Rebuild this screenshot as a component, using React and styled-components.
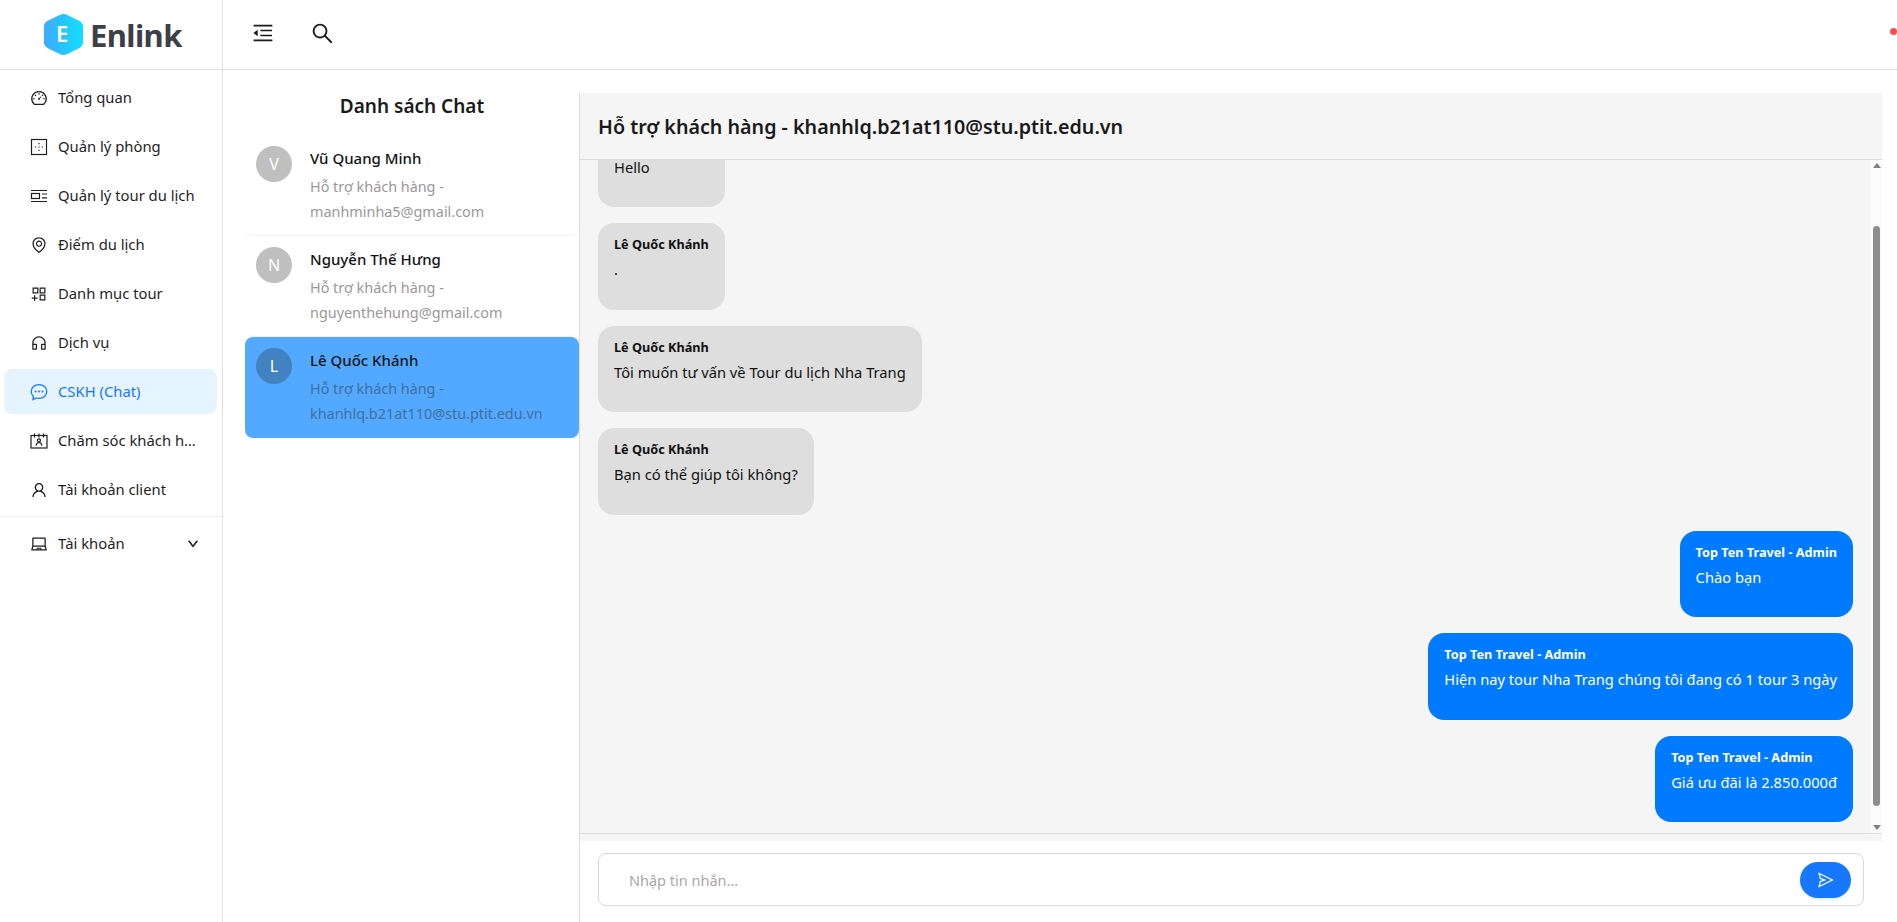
import React, { useLayoutEffect, useRef } from 'react'
import styled, { createGlobalStyle } from 'styled-components'
import {
    AiOutlineMenuFold, AiOutlineSearch, AiOutlineDashboard, AiOutlineEnvironment,
    AiOutlineAppstoreAdd, AiOutlineCustomerService, AiOutlineUser, AiOutlineLaptop,
    AiOutlineDown, AiOutlineSend,
} from 'react-icons/ai'

const RoomIcon = ({ size }) => (
    <svg width={size} height={size} viewBox="0 0 18 18" fill="none" stroke="currentColor">
        <rect x="1.5" y="1.5" width="15" height="15" strokeWidth="1.2" />
        <path d="M9 5v1.2M9 8.4v1.2M9 11.8v1.2M5 9h1.2M8.4 9h1.2M11.8 9H13" strokeWidth="1.2" />
    </svg>
)

const TourIcon = ({ size }) => (
    <svg width={size} height={size} viewBox="0 0 18 18" fill="none" stroke="currentColor" strokeWidth="1.2">
        <path d="M1 3.5h16M1 14.5h16M12 7h5M12 10.8h5" />
        <rect x="1.5" y="6.5" width="8" height="5" />
    </svg>
)

const ChatIcon = ({ size }) => (
    <svg width={size} height={size} viewBox="0 0 18 18" fill="none" stroke="currentColor">
        <path
            d="M9 1.6c4.4 0 7.8 3 7.8 6.9s-3.4 6.9-7.8 6.9c-1 0-1.9-.1-2.7-.4L3 16.6l.3-3.3C2 12 1.2 10.4 1.2 8.5 1.2 4.6 4.6 1.6 9 1.6z"
            strokeWidth="1.3"
        />
        <g fill="currentColor" stroke="none">
            <circle cx="5.6" cy="8.5" r="1" />
            <circle cx="9" cy="8.5" r="1" />
            <circle cx="12.4" cy="8.5" r="1" />
        </g>
    </svg>
)

const CareIcon = ({ size }) => (
    <svg width={size} height={size} viewBox="0 0 18 18" fill="none" stroke="currentColor" strokeWidth="1.2">
        <rect x="1" y="3.5" width="16" height="12.5" />
        <path d="M4.5 1.5v4M9 1.5v4M13.5 1.5v4" />
        <circle cx="9" cy="8.3" r="1.5" />
        <path d="M6 13.5c.4-2 1.5-3 3-3s2.600 1 3 3" />
    </svg>
)

const menu = [
    { label: 'Tổng quan', icon: AiOutlineDashboard },
    { label: 'Quản lý phòng', icon: RoomIcon },
    { label: 'Quản lý tour du lịch', icon: TourIcon },
    { label: 'Điểm du lịch', icon: AiOutlineEnvironment },
    { label: 'Danh mục tour', icon: AiOutlineAppstoreAdd },
    { label: 'Dịch vụ', icon: AiOutlineCustomerService },
    { label: 'CSKH (Chat)', icon: ChatIcon, active: true },
    { label: 'Chăm sóc khách hàng', icon: CareIcon },
    { label: 'Tài khoản client', icon: AiOutlineUser },
]

const chats = [
    { name: 'Vũ Quang Minh', email: 'manhminha5@gmail.com' },
    { name: 'Nguyễn Thế Hưng', email: 'nguyenthehung@gmail.com' },
    { name: 'Lê Quốc Khánh', email: 'khanhlq.b21at110@stu.ptit.edu.vn', active: true },
]

const CLIENT = 'Lê Quốc Khánh'
const ADMIN = 'Top Ten Travel - Admin'

const messages = [
    { from: CLIENT, text: 'Hi' },
    { from: CLIENT, text: 'Hello' },
    { from: CLIENT, text: '.' },
    { from: CLIENT, text: 'Tôi muốn tư vấn về Tour du lịch Nha Trang' },
    { from: CLIENT, text: 'Bạn có thể giúp tôi không?' },
    { from: ADMIN, text: 'Chào bạn', mine: true },
    { from: ADMIN, text: 'Hiện nay tour Nha Trang chúng tôi đang có 1 tour 3 ngày', mine: true },
    { from: ADMIN, text: 'Giá ưu đãi là 2.850.000đ', mine: true },
]

const App = () => {
    const listRef = useRef(null)

    useLayoutEffect(() => {
        listRef.current.scrollTop = listRef.current.scrollHeight
    }, [])

    return (
        <Page>
            <GlobalStyle />
            <Header>
                <LogoBox>
                    <svg width="41" height="43" viewBox="0 0 42 44">
                        <defs>
                            <linearGradient id="hex" x1="0" y1="0" x2="1" y2="0">
                                <stop offset="0" stopColor="#3fa9ff" />
                                <stop offset="1" stopColor="#10e0ff" />
                            </linearGradient>
                        </defs>
                        <path
                            d="M17 2 Q21 0 25 2 L37 8 Q41 10 41 14 L41 30 Q41 34 37 36 L25 42 Q21 44 17 42 L5 36 Q1 34 1 30 L1 14 Q1 10 5 8 Z"
                            fill="url(#hex)"
                        />
                    </svg>
                    <LogoLetter>E</LogoLetter>
                    <LogoText>Enlink</LogoText>
                </LogoBox>
                <HeaderTools>
                    <AiOutlineMenuFold size={24} />
                    <AiOutlineSearch size={25} />
                    <Dot />
                </HeaderTools>
            </Header>
            <Body>
                <Sidebar>
                    {menu.map((item) => (
                        <MenuItem key={item.label} $active={item.active}>
                            <item.icon size={18} />
                            <MenuLabel>{item.label}</MenuLabel>
                        </MenuItem>
                    ))}
                    <MenuDivider />
                    <MenuItem>
                        <AiOutlineLaptop size={18} />
                        <MenuLabel>Tài khoản</MenuLabel>
                        <AiOutlineDown size={12} strokeWidth={70} />
                    </MenuItem>
                </Sidebar>
                <Main>
                    <ChatList>
                        <ListTitle>Danh sách Chat</ListTitle>
                        {chats.map((chat) => (
                            <ChatItem key={chat.name} $active={chat.active}>
                                <Avatar $active={chat.active}>{chat.name[0]}</Avatar>
                                <ChatText>
                                    <ChatName>{chat.name}</ChatName>
                                    <ChatDesc $active={chat.active}>
                                        Hỗ trợ khách hàng -<br />
                                        {chat.email}
                                    </ChatDesc>
                                </ChatText>
                            </ChatItem>
                        ))}
                    </ChatList>
                    <ChatColumn>
                        <ChatPanel>
                            <ChatTitle>Hỗ trợ khách hàng - khanhlq.b21at110@stu.ptit.edu.vn</ChatTitle>
                            <MessageArea>
                                <MessageList ref={listRef}>
                                    {messages.map((msg, i) => (
                                        <Bubble key={i} $mine={msg.mine}>
                                            <Sender>{msg.from}</Sender>
                                            <div>{msg.text}</div>
                                        </Bubble>
                                    ))}
                                </MessageList>
                                <ScrollTrack>
                                    <ScrollArrow $up />
                                    <ScrollThumb />
                                    <ScrollArrow />
                                </ScrollTrack>
                            </MessageArea>
                        </ChatPanel>
                        <InputBar>
                            <MessageInput placeholder="Nhập tin nhắn..." />
                            <SendButton>
                                <AiOutlineSend size={18} />
                            </SendButton>
                        </InputBar>
                    </ChatColumn>
                </Main>
            </Body>
        </Page>
    )
}

const GlobalStyle = createGlobalStyle`
    html, body {
        margin: 0;
        height: 100%;
        overflow: hidden;
        background: #ffffff;
    }
    * {
        box-sizing: border-box;
    }
`

const Page = styled.div`
    height: 922px;
    display: flex;
    flex-direction: column;
    font-family: "Noto Sans", "Open Sans", sans-serif;
    font-size: 14.8px;
    color: #1a1a1a;
`

const Header = styled.header`
    height: 70px;
    flex: none;
    display: flex;
    border-bottom: 1px solid #e0e0e0;
`

const LogoBox = styled.div`
    width: 223px;
    flex: none;
    position: relative;
    display: flex;
    align-items: center;
    gap: 6px;
    padding-left: 43px;
    border-right: 1px solid #e0e0e0;
`

const LogoLetter = styled.span`
    position: absolute;
    left: 56px;
    top: 17px;
    color: #ffffff;
    font-size: 22px;
    font-weight: 600;
    line-height: 33px;
`

const LogoText = styled.span`
    font-size: 31px;
    font-weight: 700;
    color: #3c4046;
    letter-spacing: -0.6px;
`

const HeaderTools = styled.div`
    flex: 1;
    display: flex;
    align-items: center;
    gap: 35px;
    padding: 0 0 3px 28px;
    color: #1a1a1a;
`

const Dot = styled.span`
    width: 7px;
    height: 7px;
    margin-left: auto;
    margin-bottom: 3px;
    border-radius: 50%;
    background: #ff4d4f;
`

const Body = styled.div`
    flex: 1;
    display: flex;
    min-height: 0;
`

const Sidebar = styled.nav`
    width: 223px;
    flex: none;
    padding: 5px 5px 0 4px;
    border-right: 1px solid #e0e0e0;
`

const MenuItem = styled.div`
    height: 45px;
    margin-bottom: 4px;
    padding: 0 18px 0 26px;
    display: flex;
    align-items: center;
    gap: 10px;
    border-radius: 8px;
    color: ${(p) => (p.$active ? '#1677ff' : '#1f1f1f')};
    background: ${(p) => (p.$active ? '#e6f4ff' : 'transparent')};
    svg {
        flex: none;
    }
`

const MenuLabel = styled.span`
    flex: 1;
    min-width: 0;
    padding-bottom: 2px;
    white-space: nowrap;
    overflow: hidden;
    text-overflow: ellipsis;
`

const MenuDivider = styled.div`
    height: 1px;
    margin: 3px -5px 4px -4px;
    background: #eeeeee;
`

const Main = styled.main`
    flex: 1;
    min-width: 0;
    display: flex;
    padding: 23px 15px 0 22px;
`

const ChatList = styled.section`
    width: 334px;
    flex: none;
`

const ListTitle = styled.h2`
    margin: 0;
    height: 42px;
    font-size: 19px;
    font-weight: 600;
    line-height: 27px;
    text-align: center;
`

const ChatItem = styled.div`
    height: 101px;
    padding: 11px;
    display: flex;
    gap: 18px;
    border-radius: 8px;
    background: ${(p) => (p.$active ? '#52a9ff' : '#ffffff')};
    border-bottom: 1px solid ${(p) => (p.$active ? 'transparent' : '#f0f0f0')};
`

const Avatar = styled.div`
    width: 36px;
    height: 36px;
    flex: none;
    display: flex;
    align-items: center;
    justify-content: center;
    border-radius: 50%;
    color: #ffffff;
    font-size: 16px;
    background: ${(p) => (p.$active ? '#4282c1' : '#bfbfbf')};
`

const ChatText = styled.div`
    padding-top: 1px;
`

const ChatName = styled.div`
    font-size: 15px;
    font-weight: 500;
    line-height: 22px;
    margin-bottom: 5px;
    color: #141414;
`

const ChatDesc = styled.div`
    font-size: 14.4px;
    line-height: 25px;
    color: ${(p) => (p.$active ? '#3f6f9f' : '#999999')};
    white-space: nowrap;
`

const ChatColumn = styled.section`
    flex: 1;
    min-width: 0;
    display: flex;
    flex-direction: column;
    border-left: 1px solid #dddddd;
`

const ChatPanel = styled.div`
    height: 748px;
    flex: none;
    display: flex;
    flex-direction: column;
    background: #f5f5f5;
    padding-bottom: 7px;
`

const ChatTitle = styled.h3`
    margin: 0;
    height: 67px;
    flex: none;
    padding-left: 18px;
    display: flex;
    align-items: center;
    font-size: 19.7px;
    font-weight: 600;
    border-bottom: 1px solid #dddddd;
`

const MessageArea = styled.div`
    flex: 1;
    min-height: 0;
    position: relative;
    display: flex;
    border-bottom: 1px solid #dddddd;
`

const MessageList = styled.div`
    flex: 1;
    min-width: 0;
    overflow-y: scroll;
    scrollbar-width: none;
    display: flex;
    flex-direction: column;
    gap: 16px;
    padding: 16px 29px 11px 18px;
`

const ScrollTrack = styled.div`
    position: absolute;
    top: 0;
    right: 0;
    bottom: 0;
    width: 11px;
    padding: 3px 0;
    display: flex;
    flex-direction: column;
    align-items: center;
    background: #fbfbfb;
`

const ScrollArrow = styled.span`
    flex: none;
    width: 0;
    height: 0;
    border-left: 4px solid transparent;
    border-right: 4px solid transparent;
    border-top: ${(p) => (p.$up ? '0' : '5px solid #808080')};
    border-bottom: ${(p) => (p.$up ? '5px solid #808080' : '0')};
`

const ScrollThumb = styled.span`
    width: 7px;
    height: 580px;
    margin: 58px 0 auto;
    border-radius: 4px;
    background: #8e8e8e;
`

const Bubble = styled.div`
    flex: none;
    align-self: ${(p) => (p.$mine ? 'flex-end' : 'flex-start')};
    min-width: 125px;
    height: 86.5px;
    padding: 11px 16px 10px;
    border-radius: 16px;
    line-height: 22px;
    font-size: 14.7px;
    background: ${(p) => (p.$mine ? '#007bff' : '#dedede')};
    color: ${(p) => (p.$mine ? '#ffffff' : '#111111')};
`

const Sender = styled.div`
    font-size: 12.7px;
    font-weight: 700;
    line-height: 20px;
    margin-bottom: 4px;
`

const InputBar = styled.div`
    margin: 12px 18px 0 18px;
    height: 53px;
    padding-right: 12px;
    display: flex;
    align-items: center;
    border: 1px solid #d9d9d9;
    border-radius: 8px;
`

const MessageInput = styled.input`
    flex: 1;
    min-width: 0;
    border: 0;
    outline: 0;
    padding: 0 30px;
    background: transparent;
    font-family: inherit;
    font-size: 14.5px;
    color: #1a1a1a;
    &::placeholder {
        color: #a8a8a8;
    }
`

const SendButton = styled.button`
    width: 51px;
    height: 36px;
    border: 0;
    padding: 0;
    border-radius: 18px;
    display: flex;
    align-items: center;
    justify-content: center;
    color: #ffffff;
    background: #1677ff;
    box-shadow: 0 2px 0 rgba(5, 145, 255, 0.1);
`

export default App
